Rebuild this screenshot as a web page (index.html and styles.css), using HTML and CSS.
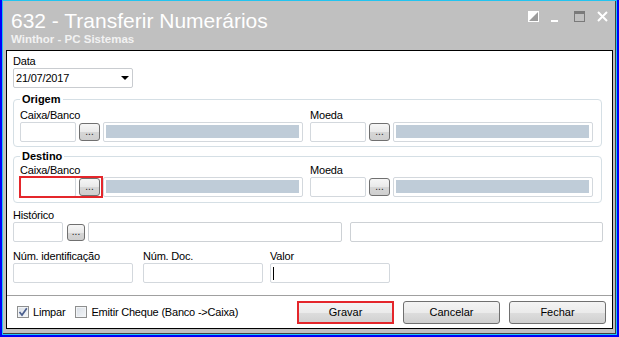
FILE: index.html
```html
<!DOCTYPE html>
<html lang="pt">
  <head>
    <meta charset="UTF-8" />
    <title>632 - Transferir Numerários</title>
    <link rel="stylesheet" href="styles.css">
  </head>
  <body>
    <div class="window">
      <div class="frame">
        <header class="titlebar">
          <div class="title">
            <h1>632 - Transferir Numerários</h1>
            <div class="subtitle">Winthor - PC Sistemas</div>
          </div>
          <div class="controls">
            <svg class="ctl-theme" width="11" height="11" viewBox="0 0 11 11">
              <rect x="0" y="0" width="11" height="11" fill="#fff" />
              <polygon points="1,10 10,1 10,10" fill="#9c9c9c" />
            </svg>
            <svg class="ctl-min" width="7" height="11" viewBox="0 0 7 11">
              <rect x="0" y="9" width="7" height="2" fill="#fff" />
            </svg>
            <svg class="ctl-max" width="11" height="11" viewBox="0 0 11 11">
              <rect x="0.5" y="0.5" width="10" height="10" fill="none" stroke="#7a7a7a" />
              <rect x="0" y="0" width="11" height="3" fill="#7a7a7a" />
            </svg>
            <svg class="ctl-close" width="11" height="11" viewBox="0 0 11 11">
              <path d="M1 1 L10 10 M10 1 L1 10" stroke="#fff" stroke-width="2" />
            </svg>
          </div>
        </header>

        <main class="panel">
          <div class="label data-label">Data</div>
          <div class="select">
            <span>21/07/2017</span>
            <span class="caret"></span>
          </div>

          <!-- Origem -->
          <fieldset class="group">
            <legend>Origem</legend>
            <div class="group-row">
              <div class="field">
                <div class="label">Caixa/Banco</div>
                <div class="lookup">
                  <div class="input code"></div>
                  <button class="dots">...</button>
                  <div class="desc"></div>
                </div>
              </div>
              <div class="field">
                <div class="label">Moeda</div>
                <div class="lookup">
                  <div class="input code"></div>
                  <button class="dots">...</button>
                  <div class="desc"></div>
                </div>
              </div>
            </div>
          </fieldset>

          <!-- Destino -->
          <fieldset class="group group--dest">
            <legend>Destino</legend>
            <div class="group-row">
              <div class="field">
                <div class="label">Caixa/Banco</div>
                <div class="lookup">
                  <div class="pick pick--hl">
                    <div class="input code"></div>
                    <button class="dots">...</button>
                  </div>
                  <div class="desc"></div>
                </div>
              </div>
              <div class="field">
                <div class="label">Moeda</div>
                <div class="lookup">
                  <div class="input code"></div>
                  <button class="dots">...</button>
                  <div class="desc"></div>
                </div>
              </div>
            </div>
          </fieldset>

          <div class="hist">
            <div class="label">Histórico</div>
            <div class="hist-row">
              <div class="input hist-code"></div>
              <button class="dots dots--small">...</button>
              <div class="input hist-desc"></div>
              <div class="input hist-extra"></div>
            </div>
          </div>

          <div class="num-row">
            <div class="num-field">
              <div class="label">Núm. identificação</div>
              <div class="input wide"></div>
            </div>
            <div class="num-field">
              <div class="label">Núm. Doc.</div>
              <div class="input wide"></div>
            </div>
            <div class="num-field">
              <div class="label">Valor</div>
              <div class="input wide"><span class="cursor"></span></div>
            </div>
          </div>

          <footer class="footer">
            <div class="checks">
              <label class="check">
                <span class="box">
                  <svg width="10" height="10" viewBox="0 0 10 10">
                    <path d="M1.5 5 L4 8 L8.8 1.2" fill="none" stroke="#4b5f8e" stroke-width="1.7" />
                  </svg>
                </span>
                Limpar
              </label>
              <label class="check">
                <span class="box"></span>
                Emitir Cheque (Banco -&gt;Caixa)
              </label>
            </div>
            <div class="actions">
              <button class="btn btn--hl">Gravar</button>
              <button class="btn">Cancelar</button>
              <button class="btn">Fechar</button>
            </div>
          </footer>
        </main>
      </div>
    </div>
  </body>
</html>
```

FILE: styles.css
```css
:root {
  --blue: #0000f8;
  --cyan: #22c4f0;
  --frame: #c0c0c0;
  --line: #d3d8dd;
  --group: #d5dfe5;
  --ro: #bfccd8;
  --red: #e4262b;
}

* {
  box-sizing: border-box;
}

body {
  margin: 0;
  width: 619px;
  height: 337px;
  overflow: hidden;
  background: var(--blue);
  font-family: "Liberation Sans", Arial, sans-serif;
  font-size: 11px;
  color: #000;
}

.window {
  margin-left: 2px;
  width: 615px;
  height: 335px;
  border: 1px solid var(--cyan);
}

.frame {
  height: 100%;
  background: var(--frame);
  border-right: 1px solid #404040;
  border-bottom: 1px solid #404040;
}

/* Barre de titre */
.titlebar {
  height: 49px;
  display: flex;
  justify-content: space-between;
  padding: 8px 7px 0 8px;
}

.titlebar h1 {
  margin: 0;
  font-weight: normal;
  font-size: 21px;
  line-height: 24px;
  color: #fff;
}

.subtitle {
  font-weight: bold;
  font-size: 11.5px;
  line-height: 13px;
  color: #f2f2f2;
}

.controls {
  display: flex;
  align-items: flex-start;
  margin-top: 2px;
}

.controls svg {
  display: block;
}

.ctl-min {
  margin-left: 12px;
}

.ctl-max {
  margin-left: 16px;
}

.ctl-close {
  margin-left: 12px;
}

/* Panneau blanc */
.panel {
  margin-left: 3px;
  width: 607px;
  height: 279px;
  border: 1px solid #000;
  background: #fff;
  padding: 0 8px 0 6px;
  display: flex;
  flex-direction: column;
  letter-spacing: -0.2px;
}

.label {
  line-height: 12px;
  margin-bottom: 1px;
  white-space: nowrap;
}

.data-label {
  margin-top: 4px;
}

.select {
  width: 120px;
  height: 20px;
  border: 1px solid #c9ccd0;
  border-radius: 2px;
  display: flex;
  align-items: center;
  justify-content: space-between;
  padding: 0 3px 0 2px;
}

.caret {
  width: 0;
  height: 0;
  border-left: 4px solid transparent;
  border-right: 4px solid transparent;
  border-top: 4px solid #000;
}

.group {
  margin: 5px 2px 0 0;
  padding: 3px 8px 4px 6px;
  border: 1px solid var(--group);
  border-radius: 4px;
  min-width: 0;
}

.group legend {
  font-weight: bold;
  line-height: 13px;
  padding: 0 2px;
  letter-spacing: 0;
}

.group--dest {
  margin-top: 3px;
  padding-top: 1px;
  padding-bottom: 5px;
}

.group-row {
  display: flex;
  gap: 7px;
}

.lookup,
.pick {
  display: flex;
  align-items: center;
  gap: 3px;
}

.pick--hl {
  position: relative;
}

.pick--hl::after {
  content: "";
  position: absolute;
  left: -1px;
  top: -1px;
  right: -3px;
  bottom: -1px;
  border: 2px solid var(--red);
}

.input {
  height: 20px;
  border: 1px solid var(--line);
  border-radius: 2px;
  background: #fff;
}

.code {
  width: 56px;
}

.desc {
  width: 200px;
  height: 20px;
  border: 1px solid var(--line);
  border-radius: 2px;
  padding: 2px 3px 3px 2px;
  background: var(--ro) content-box;
}

.dots {
  width: 21px;
  height: 18px;
  padding: 0 0 3px;
  border: 1px solid #707070;
  border-radius: 3px;
  background: linear-gradient(#f6f6f6, #e9e9e9 50%, #d6d6d6 51%, #cfcfcf);
  font-family: inherit;
  font-size: 10px;
  line-height: 10px;
  color: #222;
  display: flex;
  align-items: flex-end;
  justify-content: center;
}

.dots--small {
  width: 18px;
  height: 17px;
  margin-left: 4px;
}

/* Historique */
.hist {
  margin-top: 6px;
}

.hist-row {
  display: flex;
  align-items: center;
}

.hist-code {
  width: 50px;
}

.hist-desc {
  width: 254px;
  margin-left: 3px;
  border-color: #cdd1d5;
}

.hist-extra {
  width: 253px;
  margin-left: 8px;
  border-color: #cdd1d5;
}

.num-row {
  display: flex;
  margin-top: 8px;
}

.num-field + .num-field {
  margin-left: 10px;
}

.num-field:last-child {
  margin-left: 7px;
}

.wide {
  width: 120px;
  display: flex;
  align-items: center;
}

.cursor {
  width: 1px;
  height: 13px;
  margin-left: 2px;
  background: #000;
}

/* Pied */
.footer {
  margin: auto -8px 0 -6px;
  height: 33px;
  border-top: 1px solid #a0a0a0;
  display: flex;
  align-items: center;
  justify-content: space-between;
  padding: 0 6px 0 10px;
}

.checks {
  display: flex;
  gap: 10px;
}

.check {
  display: flex;
  align-items: center;
  gap: 4px;
  white-space: nowrap;
}

.box {
  width: 12px;
  height: 12px;
  border: 1px solid #8e8f8f;
  background: linear-gradient(135deg, #d8dee6, #f4f6f8);
  box-shadow: inset 0 0 0 1px #f2f4f6;
  display: flex;
  align-items: center;
  justify-content: center;
}

.box svg {
  display: block;
}

.actions {
  display: flex;
  gap: 9px;
}

.btn {
  width: 97px;
  height: 23px;
  padding: 0;
  border: 1px solid #707070;
  border-radius: 3px;
  background: linear-gradient(#f4f4f4, #ebebeb 50%, #dddddd 51%, #d0d0d0);
  font-family: inherit;
  font-size: 11px;
  color: #000;
}

.btn--hl {
  position: relative;
}

.btn--hl::after {
  content: "";
  position: absolute;
  inset: -1px;
  border: 2px solid var(--red);
}
```
